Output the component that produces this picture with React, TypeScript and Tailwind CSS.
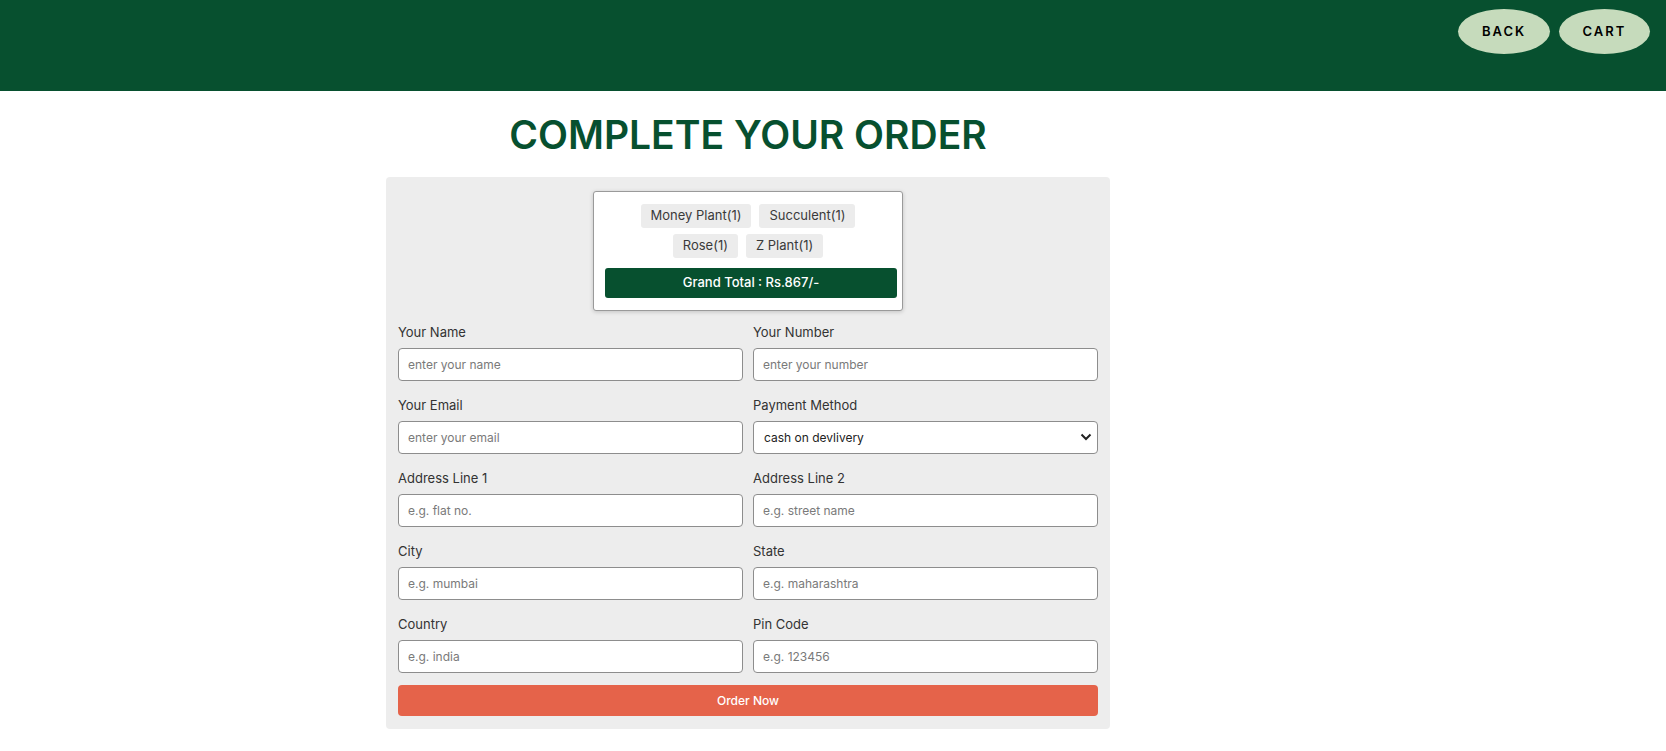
import React, { useState } from "react";

const items = [
  ["Money Plant(1)", "Succulent(1)"],
  ["Rose(1)", "Z Plant(1)"],
];

const fields = [
  { label: "Your Name", placeholder: "enter your name" },
  { label: "Your Number", placeholder: "enter your number" },
  { label: "Your Email", placeholder: "enter your email" },
  { label: "Payment Method", select: true },
  { label: "Address Line 1", placeholder: "e.g. flat no." },
  { label: "Address Line 2", placeholder: "e.g. street name" },
  { label: "City", placeholder: "e.g. mumbai" },
  { label: "State", placeholder: "e.g. maharashtra" },
  { label: "Country", placeholder: "e.g. india" },
  { label: "Pin Code", placeholder: "e.g. 123456" },
];

export default function App() {
  const [payment, setPayment] = useState("cod");

  return (
    <div className="min-h-screen bg-white font-['Inter',sans-serif] text-[#333]">
      {/* Top bar */}
      <header className="h-[91px] bg-[#07502f] flex justify-end items-start pt-[9px] pr-4 gap-[9px]">
        <button className="w-[92px] h-[45px] rounded-[50%] bg-[#c6dbbc] text-black text-[13px] font-semibold tracking-[2px]">
          BACK
        </button>
        <button className="w-[91px] h-[45px] rounded-[50%] bg-[#c6dbbc] text-black text-[13px] font-semibold tracking-[2px]">
          CART
        </button>
      </header>

      <main className="ml-[386px] w-[724px]">
        <h1 className="mt-[20px] mb-[18px] text-center text-[39px] leading-[48px] font-semibold text-[#07502f]">
          COMPLETE YOUR ORDER
        </h1>

        <div className="bg-[#ededed] rounded-[4px] px-3 pt-[14px] pb-[13px]">
          {/* Order summary */}
          <div className="w-[310px] mx-auto bg-white border border-[#9a9a9a] rounded-[3px] shadow-[0_1px_4px_rgba(0,0,0,0.18)] pl-[11px] pt-3 pb-3">
            <div className="flex flex-col gap-[6px] pr-[11px]">
              {items.map((row, i) => (
                <div key={i} className="flex justify-center gap-2">
                  {row.map((name) => (
                    <span
                      key={name}
                      className="h-6 px-[10px] flex items-center bg-[#ececec] rounded-[3px] text-[13px] text-[#3a3a3a]"
                    >
                      {name}
                    </span>
                  ))}
                </div>
              ))}
            </div>
            <div className="mt-[10px] w-[292px] h-[30px] bg-[#07502f] rounded-[3px] flex items-center justify-center text-white text-[13px] font-medium">
              Grand Total : Rs.867/-
            </div>
          </div>

          {/* Form */}
          <form
            className="mt-[11px] grid grid-cols-2 gap-x-[10px] gap-y-[14px]"
            onSubmit={(e) => e.preventDefault()}
          >
            {fields.map((f) => (
              <div key={f.label}>
                <label className="block text-[13px] leading-[20px] mb-[6px] text-[#333]">
                  {f.label}
                </label>
                {f.select ? (
                  <div className="relative">
                    <select
                      value={payment}
                      onChange={(e) => setPayment(e.target.value)}
                      className="appearance-none w-full h-[33px] bg-white border border-[#8d8d8d] rounded-[4px] pl-[10px] text-[12px] text-[#222] outline-none"
                    >
                      <option value="cod">cash on devlivery</option>
                      <option value="online">online payment</option>
                    </select>
                    <svg
                      className="absolute right-[6px] top-[12px] pointer-events-none"
                      width="12"
                      height="8"
                      viewBox="0 0 12 8"
                    >
                      <path d="M1.5 1.5 6 6l4.5-4.5" fill="none" stroke="#222" strokeWidth="2" />
                    </svg>
                  </div>
                ) : (
                  <input
                    placeholder={f.placeholder}
                    className="w-full h-[33px] bg-white border border-[#8d8d8d] rounded-[4px] px-[9px] text-[12px] outline-none placeholder:text-[#7a7a7a]"
                  />
                )}
              </div>
            ))}
            <button
              type="submit"
              className="col-span-2 mt-[-2px] h-[31px] rounded-[4px] bg-[#e5634a] text-white text-[12px] font-medium"
            >
              Order Now
            </button>
          </form>
        </div>
      </main>
    </div>
  );
}
